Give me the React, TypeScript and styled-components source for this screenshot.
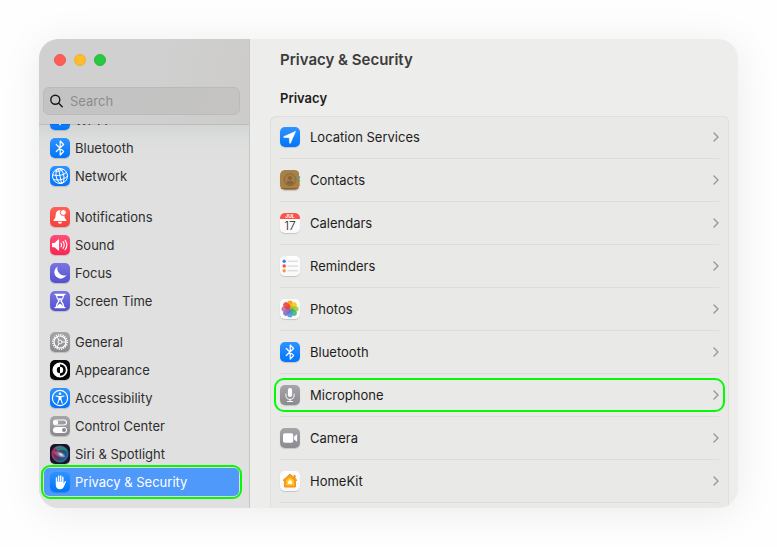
import React from "react";
import styled, { createGlobalStyle, css } from "styled-components";

const GlobalStyle = createGlobalStyle`
  * { box-sizing: border-box; }
  html, body { margin: 0; background: #fefefe; }
  body {
    font-family: Inter, "Liberation Sans", sans-serif;
    font-size: 13px;
    line-height: 20px;
    color: #1d1d1d;
  }
  button, input { font: inherit; color: inherit; }
`;

const Page = styled.div`
  display: flex;
  height: 100vh;
  min-height: 320px;
  padding: 39px;
  overflow: hidden;
`;

const Window = styled.div`
  flex: 1;
  display: flex;
  min-width: 0;
  overflow: hidden;
  border-radius: 20px;
  background: #ededeb;
  box-shadow: 0 4px 40px rgba(0, 0, 0, 0.08);
`;

const Sidebar = styled.aside`
  flex: none;
  display: flex;
  flex-direction: column;
  width: 211px;
  border-right: 1px solid #c6c6c5;
  background: #e0e0e0;
`;

const SidebarHeader = styled.header`
  flex: none;
  position: relative;
  z-index: 1;
  display: flex;
  flex-direction: column;
  gap: 20px;
  padding: 14px 9px 9px 4px;
  border-bottom: 1px solid rgba(0, 0, 0, 0.12);
  background: linear-gradient(100deg, #d0d0d0 50%, #cdccca) padding-box;
`;

const TrafficLights = styled.div`
  display: flex;
  gap: 8px;
  height: 14px;
  align-items: center;
  padding-left: 11px;
`;

const Light = styled.button<{ $color: string; $edge: string }>`
  width: 12px;
  height: 12px;
  padding: 0;
  border: 1px solid ${(p) => p.$edge};
  border-radius: 50%;
  background: ${(p) => p.$color};
`;

const SearchField = styled.label`
  display: flex;
  align-items: center;
  gap: 7px;
  height: 28px;
  padding: 0 6px;
  border: 1px solid #bababa;
  border-radius: 6px;
  background: linear-gradient(100deg, #c3c3c3, #c5c4c3);
`;

const SearchInput = styled.input`
  flex: 1;
  min-width: 0;
  padding: 0;
  border: 0;
  outline: 0;
  background: transparent;
  &::placeholder { color: #8c8c8c; opacity: 1; }
`;

const NavScroll = styled.nav`
  flex: 1;
  min-height: 0;
  margin-top: -1px;
  overflow: hidden;
  display: flex;
  flex-direction: column;
  justify-content: flex-end;
  padding: 0 10px 12px 5px;
  background: linear-gradient(#d3d5d6, #dcdddd 16px, #e0e0e0 34px);
`;

const NavGroup = styled.ul`
  flex: none;
  list-style: none;
  margin: 0;
  padding: 0;
  & + & { margin-top: 13px; }
`;

const NavItem = styled.li`
  height: 28px;
`;

const NavLink = styled.a<{ $selected?: boolean }>`
  position: relative;
  display: flex;
  align-items: center;
  gap: 5px;
  height: 28px;
  padding: 0 6px;
  border-radius: 5px;
  color: #2e2e2e;
  text-decoration: none;
  ${(p) =>
    p.$selected &&
    css`
      color: #fff;
      background: #4f99fb;
    `}
`;

const Highlight = styled.span<{ $area: "nav" | "row" }>`
  position: absolute;
  border: 2px solid #04fa04;
  pointer-events: none;
  ${(p) =>
    p.$area === "nav"
      ? css`inset: -3px; border-radius: 9px;`
      : css`inset: 4px -6px; border-radius: 10px;`}
`;

const Tile = styled.span<{ $bg: string }>`
  flex: none;
  display: block;
  width: 20px;
  height: 20px;
  border-radius: 5px;
  overflow: hidden;
  background: ${(p) => p.$bg};
  box-shadow: 0 1px 1px rgba(0, 0, 0, 0.16);
  svg { display: block; width: 20px; height: 20px; }
`;

const Content = styled.main`
  flex: 1;
  min-width: 0;
  display: flex;
  flex-direction: column;
  padding: 11px 9px 0 20px;
`;

const Title = styled.h1`
  flex: none;
  margin: 0 10px;
  font-size: 15px;
  line-height: 20px;
  font-weight: 600;
  color: #3c3c3b;
`;

const SectionTitle = styled.h2`
  flex: none;
  margin: 18px 10px 8px;
  font-size: 13px;
  line-height: 20px;
  font-weight: 600;
  color: #1c1c1c;
`;

const Card = styled.ul`
  flex: 1;
  min-height: 0;
  list-style: none;
  margin: 0;
  padding: 0 10px;
  border-radius: 6px 6px 0 0;
  background: #e9e9e7;
  box-shadow: inset 1px 1px #dfdfdd, inset -1px 0 #dfdfdd;
`;

const CardItem = styled.li`
  height: 43px;
  border-bottom: 1px solid #dddddb;
`;

const RowButton = styled.button`
  position: relative;
  display: flex;
  align-items: center;
  gap: 10px;
  width: 100%;
  height: 42px;
  padding: 0;
  border: 0;
  background: transparent;
  text-align: left;
`;

const RowLabel = styled.span`
  flex: 1;
`;

const BLUE = "linear-gradient(#2f93ff, #0074fb)";
const GRAY = "linear-gradient(#a5a5aa, #8a8a8f)";
const INDIGO = "linear-gradient(#7876e2, #5451cf)";
const WHITE = "linear-gradient(#ffffff, #f8f8f8)";

const petals = ["#f98d0c", "#f3c80a", "#9cc92e", "#3cb464", "#3b97d8", "#6f6bc6", "#b765b4", "#ec3c36"];

const art = {
  wifi: (
    <g fill="none" stroke="#fff" strokeWidth="1.8">
      <path d="M3.5 8.5a9.5 9.5 0 0 1 13 0M6 11.3a6 6 0 0 1 8 0" />
      <path d="M8.3 13.7L10 15.5l1.7-1.8a2.6 2.6 0 0 0-3.4 0z" fill="#fff" stroke="none" />
    </g>
  ),
  bluetooth: (
    <path d="M6.3 6.5l7.3 7L10.2 17V3l3.4 3.5-7.3 7" fill="none" stroke="#fff" strokeWidth="1.2" strokeLinejoin="round" strokeLinecap="round" />
  ),
  network: (
    <g fill="none" stroke="#fff" strokeWidth="1">
      <circle cx="10" cy="10" r="7.5" />
      <ellipse cx="10" cy="10" rx="3.8" ry="7.5" transform="rotate(-12 10 10)" />
      <path d="M8.5 2.6l3 14.8M2.8 8.8c4.8 1.6 9.6.8 13.8-2.4M3.6 13.5c5 1.2 9.6.2 13.6-3M5 4.9c2.8.9 5.8.4 8-1.7" />
    </g>
  ),
  bell: (
    <g fill="#fff">
      <path d="M10 3.2c-2.9 0-4.2 2.1-4.3 4.5-.1 2.8-.8 4-1.9 4.9-.6.5-.4 1.3.4 1.3h11.6c.8 0 1-.8.4-1.3-1.1-.9-1.8-2.1-1.9-4.9C14.2 5.3 12.9 3.2 10 3.2z" />
      <path d="M8 14.8h4a2 2 0 0 1-4 0z" />
      <circle cx="13.3" cy="5.5" r="3" stroke="#ff5148" strokeWidth="1" />
    </g>
  ),
  sound: (
    <g>
      <path d="M2 8h2.5L8.3 4.5c.4-.3.8-.1.8.4v10.2c0 .5-.4.7-.8.4L4.5 12.2H2.500c-.4 0-.5-.2-.5-.5z" fill="#fff" />
      <path d="M11 8.2a3 3 0 0 1 0 3.6M13 6.700a5.500 5.500 0 0 1 0 6.600M15.100 5.200a8.200 8.200 0 0 1 0 9.600" fill="none" stroke="#fff" strokeWidth="1.1" strokeLinecap="round" />
    </g>
  ),
  moon: <path d="M7.7 3.6a6.4 6.4 0 1 0 8.8 8.4A6.7 6.7 0 0 1 7.7 3.6z" fill="#fff" />,
  hourglass: (
    <g>
      <path d="M5.2 3.5h9.6M5.2 16.5h9.6" stroke="#fff" strokeWidth="1.6" strokeLinecap="round" />
      <path d="M6.5 4.3c0 2.8 1 4 2.5 5.7-1.5 1.7-2.5 2.9-2.5 5.7h7c0-2.8-1-4-2.5-5.7 1.5-1.7 2.5-2.9 2.5-5.7z" fill="none" stroke="#fff" strokeWidth="1.2" />
      <path d="M8 7.3h4L10 9.8zM7.3 15.6c.2-1.5 1.4-2.4 2.7-3.2 1.3.8 2.5 1.7 2.7 3.2z" fill="#fff" />
    </g>
  ),
  gear: (
    <g fill="none" stroke="#fff">
      <circle cx="10" cy="10" r="7.2" strokeWidth="1.5" strokeDasharray="1.2 1.062" />
      <circle cx="10" cy="10" r="6" strokeWidth="1.2" />
      <circle cx="10" cy="10" r="1.9" strokeWidth="0.9" />
      <path d="M11.9 10h4M9 8.4L7 4.9M9 11.6l-2 3.5" strokeWidth="1" />
    </g>
  ),
  appearance: (
    <g>
      <circle cx="10" cy="10" r="6.7" fill="none" stroke="#fff" strokeWidth="1.7" />
      <path d="M10 3.3a6.7 6.7 0 0 0 0 13.4v-3.5a3.2 3.2 0 0 1 0-6.4z" fill="#fff" />
      <path d="M10 6.8a3.2 3.2 0 0 1 0 6.4z" fill="#fff" />
    </g>
  ),
  accessibility: (
    <g>
      <circle cx="10" cy="10" r="7.6" fill="none" stroke="#fff" strokeWidth="1.2" />
      <circle cx="10" cy="5.7" r="1.3" fill="#fff" />
      <path d="M6 8l3 .6h2l3-.6M9 8.6v3l-1.300 3.700M11 8.600v3l1.300 3.700M10 8.800v2.600" fill="none" stroke="#fff" strokeWidth="1.1" strokeLinecap="round" strokeLinejoin="round" />
    </g>
  ),
  controls: (
    <g>
      <rect x="3.5" y="4" width="13" height="5" rx="2.5" fill="none" stroke="#fff" strokeWidth="1.1" />
      <circle cx="6" cy="6.5" r="2.3" fill="#fff" />
      <rect x="3" y="11" width="14" height="6" rx="3" fill="#fff" />
      <circle cx="14" cy="14" r="2" fill="#88888d" />
    </g>
  ),
  siri: (
    <g>
      <defs>
        <radialGradient id="siriGlow">
          <stop offset="0" stopColor="#fff" />
          <stop offset="0.4" stopColor="#a5c8e8" stopOpacity="0.8" />
          <stop offset="1" stopColor="#4d7fd0" stopOpacity="0" />
        </radialGradient>
        <linearGradient id="siriOrb" x1="0" y1="0.3" x2="1" y2="0.7">
          <stop offset="0" stopColor="#c92468" />
          <stop offset="0.45" stopColor="#5f4b7c" />
          <stop offset="0.7" stopColor="#1d7390" />
          <stop offset="1" stopColor="#2f55b8" />
        </linearGradient>
      </defs>
      <circle cx="10" cy="10" r="8.600" fill="url(#siriOrb)" />
      <circle cx="10" cy="10" r="6.500" fill="#20243c" opacity="0.350" />
      <path d="M5 3.500C9 .8 15.500 2.500 17.500 7.500c-3.500-2.200-7-1.700-10-.2z" fill="#1f9e86" opacity="0.700" />
      <path d="M3.200 8c3-1.5 7.5-.5 12.300 4.5-4.5 2-9 .5-12.300-4.5z" fill="#e8557f" opacity="0.6" />
      <ellipse cx="11" cy="10.600" rx="5.5" ry="2.8" fill="url(#siriGlow)" transform="rotate(30 11 10.600)" />
    </g>
  ),
  hand: (
    <g fill="none" stroke="#fff" strokeWidth="1.4" strokeLinecap="round">
      <path d="M6.500 10.500V6M8.600 9V4.200M10.700 9V4M12.800 10V5.300M15.300 9.800l-1.700 3" />
      <path d="M6.500 10.300v2.500c0 2.400 1.500 3.700 3.500 3.700 1.900 0 3.200-1.100 3.700-3.100l.3-1.200-1.200.3V10.300z" fill="#fff" strokeLinejoin="round" />
    </g>
  ),
  location: <path d="M15.7 4.300L3.900 9.500c-.6.3-.5.9.1.9l5.300.3.3 5.300c0 .6.7.7.9.1z" fill="#fff" stroke="#fff" strokeWidth="0.5" strokeLinejoin="round" />,
  contacts: (
    <g>
      <rect x="0" y="0" width="19" height="20" rx="4" fill="#a88149" />
      <path d="M19 6h1v3h-1z" fill="#38b9df" />
      <path d="M19 9.500h1v3h-1z" fill="#5cb94c" />
      <path d="M19 13h1v3h-1z" fill="#f39535" />
      <path d="M1 18.500h17" stroke="#886437" strokeWidth="1" />
      <circle cx="10" cy="9.7" r="6" fill="#a37d45" stroke="#85653a" strokeWidth="0.9" />
      <circle cx="10" cy="8" r="2.1" fill="#846438" />
      <path d="M6.2 13.300c.7-3.300 6.900-3.300 7.600 0-2 2.200-5.600 2.200-7.600 0z" fill="#846438" />
    </g>
  ),
  calendar: (
    <g textAnchor="middle">
      <rect width="20" height="6" fill="#fb5148" />
      <text x="10" y="5" fontSize="5" fontWeight="700" fill="#fff">JUL</text>
      <text x="10" y="16.5" fontSize="12" fontWeight="300" fill="#222">17</text>
    </g>
  ),
  reminders: (
    <g>
      <path d="M7.5 5.2H18M7.5 10H18M7.5 14.8H18" stroke="#d0d0d0" strokeWidth="1" />
      <circle cx="4.2" cy="5.2" r="1.7" fill="#3b84ed" />
      <circle cx="4.2" cy="10" r="1.7" fill="#ef504b" />
      <circle cx="4.2" cy="14.8" r="1.7" fill="#f39a42" />
    </g>
  ),
  photos: (
    <g>
      {petals.map((color, i) => (
        <rect key={color} x="7.3" y="1.5" width="5.4" height="8.2" rx="2.7" fill={color} opacity="0.85" transform={`rotate(${i * 45} 10 10)`} />
      ))}
    </g>
  ),
  microphone: (
    <g>
      <rect x="7.9" y="3" width="4.2" height="9" rx="2.1" fill="#fff" />
      <path d="M5.9 9v1.300a4.100 4.100 0 0 0 8.200 0V9M10 14.400v2M7.500 16.500h5" fill="none" stroke="#fff" strokeWidth="1" strokeLinecap="round" />
    </g>
  ),
  camera: (
    <g fill="#fff">
      <rect x="3" y="5.300" width="10.200" height="9.400" rx="1.800" />
      <path d="M14 8.700l2.300-2c.4-.3.8-.1.8.4v5.800c0 .5-.4.7-.8.4l-2.300-2z" />
    </g>
  ),
  home: (
    <g strokeLinejoin="round">
      <path d="M13.700 4h1.800v4h-1.800z" fill="#ed8c18" />
      <path d="M10 3L3 9.400h1.600V16h10.800V9.400H17z" fill="#f99b1e" stroke="#f0901b" strokeWidth="1" />
      <path d="M10 6l-4 3.600v4.900h8V9.600z" fill="#ffc52f" />
      <path d="M10 8.500l-2 1.900v2.700h4v-2.700z" fill="#fff9d3" />
    </g>
  ),
};

type IconName = keyof typeof art;

const tileColors: Record<IconName, string> = {
  wifi: BLUE,
  bluetooth: BLUE,
  network: BLUE,
  bell: "linear-gradient(#ff6057, #fa3f37)",
  sound: "linear-gradient(#ff4f78, #fb2452)",
  moon: INDIGO,
  hourglass: INDIGO,
  gear: GRAY,
  appearance: "#060606",
  accessibility: BLUE,
  controls: GRAY,
  siri: "#151724",
  hand: BLUE,
  location: BLUE,
  contacts: "transparent",
  calendar: WHITE,
  reminders: WHITE,
  photos: WHITE,
  microphone: GRAY,
  camera: GRAY,
  home: WHITE,
};

const AppIcon = ({ name }: { name: IconName }) => (
  <Tile $bg={tileColors[name]}>
    <svg viewBox="0 0 20 20" aria-hidden="true">{art[name]}</svg>
  </Tile>
);

type Entry = { label: string; icon: IconName };

const navGroups: Entry[][] = [
  [
    { label: "Wi-Fi", icon: "wifi" },
    { label: "Bluetooth", icon: "bluetooth" },
    { label: "Network", icon: "network" },
  ],
  [
    { label: "Notifications", icon: "bell" },
    { label: "Sound", icon: "sound" },
    { label: "Focus", icon: "moon" },
    { label: "Screen Time", icon: "hourglass" },
  ],
  [
    { label: "General", icon: "gear" },
    { label: "Appearance", icon: "appearance" },
    { label: "Accessibility", icon: "accessibility" },
    { label: "Control Center", icon: "controls" },
    { label: "Siri & Spotlight", icon: "siri" },
    { label: "Privacy & Security", icon: "hand" },
  ],
];

const privacyRows: Entry[] = [
  { label: "Location Services", icon: "location" },
  { label: "Contacts", icon: "contacts" },
  { label: "Calendars", icon: "calendar" },
  { label: "Reminders", icon: "reminders" },
  { label: "Photos", icon: "photos" },
  { label: "Bluetooth", icon: "bluetooth" },
  { label: "Microphone", icon: "microphone" },
  { label: "Camera", icon: "camera" },
  { label: "HomeKit", icon: "home" },
];

export default function App() {
  return (
    <>
      <GlobalStyle />
      <Page>
        <Window>
          <Sidebar>
            <SidebarHeader>
              <TrafficLights>
                <Light $color="#ff5f57" $edge="#ee544d" aria-label="Close" />
                <Light $color="#febc2e" $edge="#eeae2b" aria-label="Minimize" />
                <Light $color="#28c840" $edge="#26b83b" aria-label="Zoom" />
              </TrafficLights>
              <SearchField>
                <svg width="13" height="14" viewBox="0 0 13 14" fill="none" stroke="#161616" strokeWidth="1.4" strokeLinecap="round" aria-hidden="true">
                  <circle cx="5.3" cy="5.8" r="4.5" />
                  <path d="M8.7 9.2l3.5 3.6" />
                </svg>
                <SearchInput type="search" placeholder="Search" aria-label="Search" />
              </SearchField>
            </SidebarHeader>
            <NavScroll aria-label="Settings">
              {navGroups.map((group) => (
                <NavGroup key={group[0].label}>
                  {group.map(({ label, icon }) => {
                    const selected = label === "Privacy & Security";
                    return (
                      <NavItem key={label}>
                        <NavLink href="#" $selected={selected} aria-current={selected ? "page" : undefined}>
                          <AppIcon name={icon} />
                          {label}
                          {selected && <Highlight $area="nav" />}
                        </NavLink>
                      </NavItem>
                    );
                  })}
                </NavGroup>
              ))}
            </NavScroll>
          </Sidebar>
          <Content>
            <Title>Privacy &amp; Security</Title>
            <SectionTitle>Privacy</SectionTitle>
            <Card>
              {privacyRows.map(({ label, icon }) => (
                <CardItem key={label}>
                  <RowButton type="button">
                    <AppIcon name={icon} />
                    <RowLabel>{label}</RowLabel>
                    <svg width="8" height="10" viewBox="0 0 8 10" fill="none" stroke="#989896" strokeWidth="1.4" strokeLinecap="round" strokeLinejoin="round" aria-hidden="true">
                      <path d="M3 1l4 4-4 4" />
                    </svg>
                    {label === "Microphone" && <Highlight $area="row" />}
                  </RowButton>
                </CardItem>
              ))}
            </Card>
          </Content>
        </Window>
      </Page>
    </>
  );
}
